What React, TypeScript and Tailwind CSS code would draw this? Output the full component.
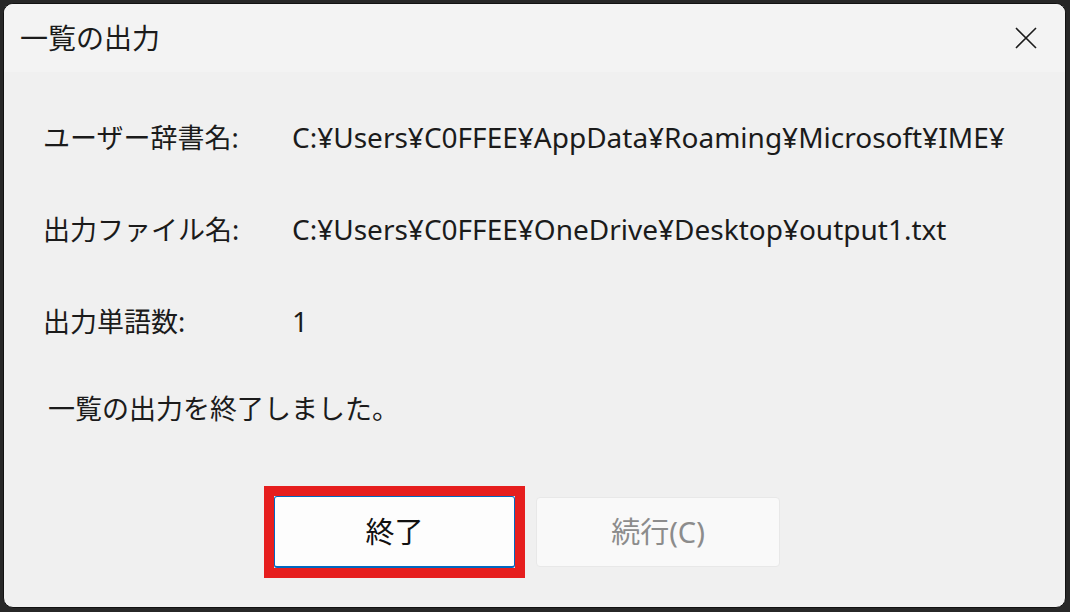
import React from "react";

const rows = [
  { label: "ユーザー辞書名:", value: "C:¥Users¥C0FFEE¥AppData¥Roaming¥Microsoft¥IME¥" },
  { label: "出力ファイル名:", value: "C:¥Users¥C0FFEE¥OneDrive¥Desktop¥output1.txt" },
  { label: "出力単語数:", value: "1" },
];

const App: React.FC = () => {
  return (
    <div
      className="w-[1070px] h-[612px] bg-[#272727] pt-[3px] pl-[3px] overflow-hidden"
      style={{ fontFamily: '"Noto Sans", "Noto Sans CJK JP", sans-serif' }}
    >
      <div className="w-[1063px] h-[605px] rounded-[10px] bg-[#f0f0f0] overflow-hidden flex flex-col border border-[#111111] text-[#1b1b1b]">
        {/* title bar */}
        <div className="h-[68px] shrink-0 bg-[#f3f3f3] flex items-center justify-between pl-[16px] pr-[28px]">
          <span className="text-[28px] leading-none">一覧の出力</span>
          <svg width="22" height="22" viewBox="0 0 22 22" className="text-[#1b1b1b]">
            <path d="M1 1 L21 21 M21 1 L1 21" stroke="currentColor" strokeWidth="1.6" fill="none" />
          </svg>
        </div>

        {/* body */}
        <div className="flex flex-col pt-[19px]">
          {rows.map((row) => (
            <div key={row.label} className="h-[92px] flex items-center">
              <span className="w-[288px] shrink-0 pl-[39px] text-[27px] leading-none">{row.label}</span>
              <span className="text-[28px] leading-none whitespace-nowrap">{row.value}</span>
            </div>
          ))}
          <div className="h-[82px] flex items-center pl-[44px]">
            <span className="text-[27px] leading-none">一覧の出力を終了しました。</span>
          </div>
        </div>

        {/* buttons */}
        <div className="mt-[37px] flex items-center pl-[260px] gap-[11px]">
          <div className="border-[10px] border-[#e61e1e]">
            <button className="w-[241px] h-[72px] bg-[#fdfdfd] rounded-[3px] border border-[#0067c0] border-b-2 text-[29px] text-[#111111] flex items-center justify-center">
              終了
            </button>
          </div>
          <button className="w-[244px] h-[70px] bg-[#f9f9f9] rounded-[4px] border border-[#e8e8e8] text-[29px] text-[#8c8c8c] flex items-center justify-center">
            続行(C)
          </button>
        </div>
      </div>
    </div>
  );
};

export default App;
